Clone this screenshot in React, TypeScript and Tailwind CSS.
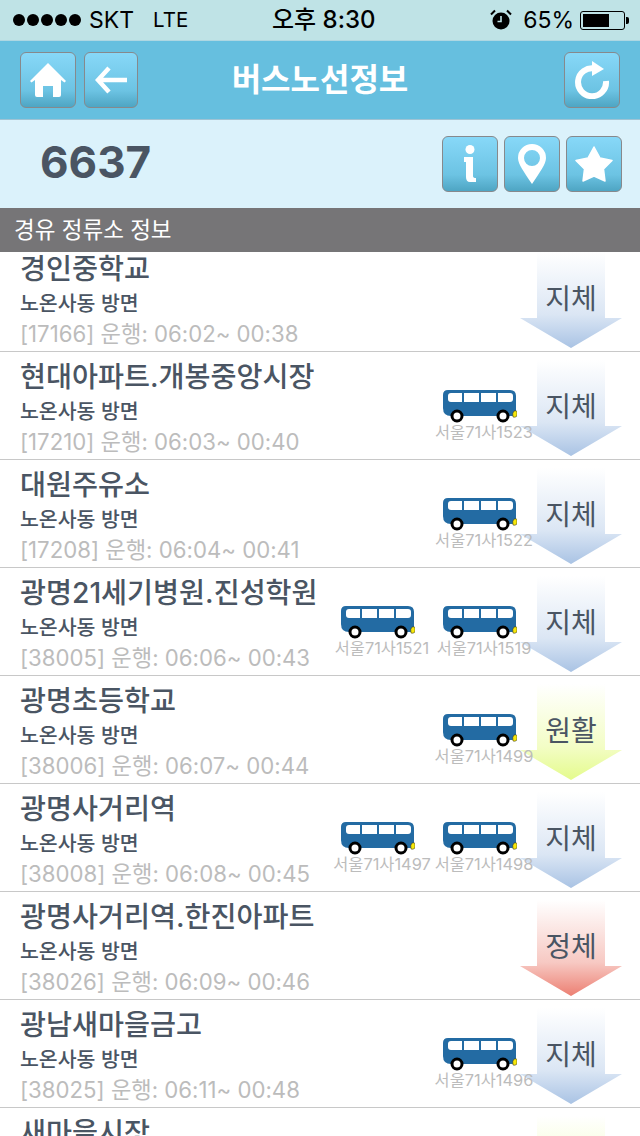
import { useId } from 'react';

type Traffic = '지체' | '원활' | '정체';

interface Stop {
  name: string;
  id: string;
  hours: string;
  traffic: Traffic;
  buses: string[];
}

const ARROW_COLORS: Record<Traffic, [string, string]> = {
  지체: ['#dbe6f4', '#a9c3e4'],
  원활: ['#f3fdc6', '#e4fb8c'],
  정체: ['#f7c9c3', '#ec7f72'],
};

const STOPS: Stop[] = [
  { name: '경인중학교', id: '17166', hours: '06:02~ 00:38', traffic: '지체', buses: [] },
  { name: '현대아파트.개봉중앙시장', id: '17210', hours: '06:03~ 00:40', traffic: '지체', buses: ['서울71사1523'] },
  { name: '대원주유소', id: '17208', hours: '06:04~ 00:41', traffic: '지체', buses: ['서울71사1522'] },
  { name: '광명21세기병원.진성학원', id: '38005', hours: '06:06~ 00:43', traffic: '지체', buses: ['서울71사1521', '서울71사1519'] },
  { name: '광명초등학교', id: '38006', hours: '06:07~ 00:44', traffic: '원활', buses: ['서울71사1499'] },
  { name: '광명사거리역', id: '38008', hours: '06:08~ 00:45', traffic: '지체', buses: ['서울71사1497', '서울71사1498'] },
  { name: '광명사거리역.한진아파트', id: '38026', hours: '06:09~ 00:46', traffic: '정체', buses: [] },
  { name: '광남새마을금고', id: '38025', hours: '06:11~ 00:48', traffic: '지체', buses: ['서울71사1496'] },
  { name: '새마을시장', id: '38024', hours: '06:12~ 00:49', traffic: '원활', buses: [] },
];

function IconButton({ wide = true, children }: { wide?: boolean; children: React.ReactNode }) {
  return (
    <div
      className={`${wide ? 'w-[56px]' : 'w-[54px]'} h-[56px] flex items-center justify-center rounded-[6px] border border-[#87898c] bg-gradient-to-b from-[#87d8f8] via-[#6cc3e3] via-70% to-[#4ea5c3]`}
    >
      {children}
    </div>
  );
}

function BusIcon() {
  return (
    <svg width="74" height="33" viewBox="0 0 74 33" className="mr-[8px]">
      <path d="M5 0H67Q73 0 73 6V26H8Q0 26 0 18V5Q0 0 5 0Z" fill="#236ba3" />
      <path d="M8 3H19V12H8Q5 12 5 9V6Q5 3 8 3Z" fill="#fff" />
      <rect x="21" y="3" width="15" height="9" fill="#fff" />
      <rect x="38" y="3" width="15" height="9" fill="#fff" />
      <path d="M55 3H67Q70 3 70 6V9Q70 12 67 12H55Z" fill="#fff" />
      <circle cx="14" cy="26" r="5" fill="#fff" stroke="#000" strokeWidth="3" />
      <circle cx="60" cy="26" r="5" fill="#fff" stroke="#000" strokeWidth="3" />
      <path d="M71 21Q74 20 74 22V26Q72 28 70 27Q69 23 71 21Z" fill="#f7e80a" stroke="#222" strokeWidth="0.5" />
    </svg>
  );
}

function TrafficArrow({ traffic }: { traffic: Traffic }) {
  const gid = useId();
  const [mid, end] = ARROW_COLORS[traffic];
  return (
    <div className="relative w-[102px] h-[98px] mt-[8px] flex justify-center">
      <svg width="102" height="98" viewBox="0 0 102 98" className="absolute left-0 top-0">
        <defs>
          <linearGradient id={gid} x1="0" y1="0" x2="0" y2="1">
            <stop offset="0" stopColor="#ffffff" />
            <stop offset="0.65" stopColor={mid} />
            <stop offset="1" stopColor={end} />
          </linearGradient>
        </defs>
        <path d="M17 0H85V66H102L51 96 0 66H17Z" fill={`url(#${gid})`} />
      </svg>
      <span className="relative mt-[29px] h-[36px] leading-[36px] text-[28px] text-[#4a5563]">{traffic}</span>
    </div>
  );
}

function StopRow({ stop }: { stop: Stop }) {
  return (
    <div className="h-[108px] flex border-b border-[#c8c8c8] pl-[20px] pr-[18px]">
      <div className="flex-1 min-w-0 pt-[9px]">
        <div className="h-[32px] leading-[32px] text-[28.250px] font-medium text-[#4a5563] whitespace-nowrap">{stop.name}</div>
        <div className="h-[28px] mt-[5px] leading-[28px] text-[20.500px] font-medium text-[#4a5563]">노온사동 방면</div>
        <div className="h-[28px] mt-[2px] leading-[28px] text-[22.200px] text-[#bcbcbc] whitespace-nowrap">
          [{stop.id}] 운행: {stop.hours}
        </div>
      </div>
      <div className="relative z-10 flex items-start -mr-[15px] pt-[38px]">
        {stop.buses.map((bus) => (
          <div key={bus} className="w-[102px] flex flex-col items-center">
            <BusIcon />
            <span className="h-[18px] leading-[18px] text-[16.400px] text-[#bcbcbc] whitespace-nowrap">{bus}</span>
          </div>
        ))}
      </div>
      <TrafficArrow traffic={stop.traffic} />
    </div>
  );
}

export default function App() {
  return (
    <div className="w-[640px] h-[1136px] overflow-hidden bg-white font-['Inter','Noto_Sans_CJK_KR',sans-serif]">
      <div className="h-[41px] flex items-center justify-between bg-[#bfe3e6] border-b border-[#aed7e2] pl-[13px] pr-[11px] text-[23px] text-black relative">
        <div className="flex items-center">
          <div className="flex gap-[2px]">
            {[0, 1, 2, 3, 4].map((i) => (
              <span key={i} className="w-[12px] h-[12px] rounded-full bg-black" />
            ))}
          </div>
          <span className="ml-[8px]">SKT</span>
          <span className="ml-[19px] text-[20.500px]">LTE</span>
        </div>
        <span className="absolute left-[272px] text-[24px] font-medium">오후 8:30</span>
        <div className="flex items-center">
          <svg width="22" height="22" viewBox="0 0 22 22">
            <circle cx="11" cy="12" r="8.500" fill="#000" />
            <path d="M11 7V12.500H7.500" fill="none" stroke="#bfe3e6" strokeWidth="1.600" />
            <path d="M1 5.500 5 1.500M21 5.500 17 1.500" stroke="#000" strokeWidth="2" />
          </svg>
          <span className="ml-[11px]">65%</span>
          <div className="ml-[6px] w-[45px] h-[19px] rounded-[3px] border border-black p-[2px]">
            <div className="w-[26px] h-full bg-black" />
          </div>
          <div className="ml-[1px] w-[3px] h-[7px] bg-black rounded-r-[2px]" />
        </div>
      </div>

      <div className="h-[79px] flex items-center px-[20px] bg-[#66bfdf] border-b border-[#9fc3d4] relative">
        <div className="flex gap-[8px]">
          <IconButton>
            <svg width="38" height="36" viewBox="0 0 38 36">
              <path d="M19 1 37 19 35.500 20.500 32 18V33Q32 35 30 35H24V24H14V35H8Q6 35 6 33V18L2.500 20.500 1 19Z" fill="#fff" />
            </svg>
          </IconButton>
          <IconButton wide={false}>
            <svg width="32" height="28" viewBox="0 0 32 28">
              <path d="M14 2 3 14 14 26M3 14H32" fill="none" stroke="#fff" strokeWidth="4.500" />
            </svg>
          </IconButton>
        </div>
        <span className="absolute left-0 right-0 text-center text-[32px] font-bold text-white pointer-events-none">버스노선정보</span>
        <div className="ml-auto">
          <IconButton>
            <svg width="36" height="38" viewBox="0 0 36 38">
              <path d="M21 7.500A14 14 0 1 0 32 20" fill="none" stroke="#fff" strokeWidth="6" />
              <path d="M18 0 30 8 18 15Z" fill="#fff" />
            </svg>
          </IconButton>
        </div>
      </div>

      <div className="h-[88px] flex items-center justify-between bg-[#dbf2fb] pl-[40px] pr-[18px]">
        <span className="-mt-[4px] text-[44px] font-bold text-[#4a5563]">6637</span>
        <div className="flex gap-[6px]">
          <IconButton>
            <svg width="14" height="38" viewBox="0 0 14 38">
              <circle cx="7" cy="4.500" r="4.500" fill="#fff" />
              <path d="M1 12H10V31Q10 33 13 33V37H7Q3 37 3 32V17H1Z" fill="#fff" />
            </svg>
          </IconButton>
          <IconButton>
            <svg width="28" height="40" viewBox="0 0 28 40">
              <path fillRule="evenodd" d="M14 0A14 14 0 0 1 28 14C28 20 22 28 14 40 6 28 0 20 0 14A14 14 0 0 1 14 0ZM14 6A8 8 0 1 0 14 22 8 8 0 0 0 14 6Z" fill="#fff" />
            </svg>
          </IconButton>
          <IconButton>
            <svg width="38" height="36" viewBox="0 0 38 36">
              <path d="M19 1 25 12 37 14.500 28.500 23 30 35 19 30 8 35 9.500 23 1 14.500 13 12Z" fill="#fff" stroke="#fff" strokeWidth="1.500" strokeLinejoin="round" />
            </svg>
          </IconButton>
        </div>
      </div>

      <div className="h-[44px] flex items-center pl-[14px] bg-[#767577] text-[22.500px] text-white">경유 정류소 정보</div>

      <div className="h-[884px] overflow-hidden">
        <div className="-mt-[8px]">
          {STOPS.map((stop) => (
            <StopRow key={stop.id} stop={stop} />
          ))}
        </div>
      </div>
    </div>
  );
}
